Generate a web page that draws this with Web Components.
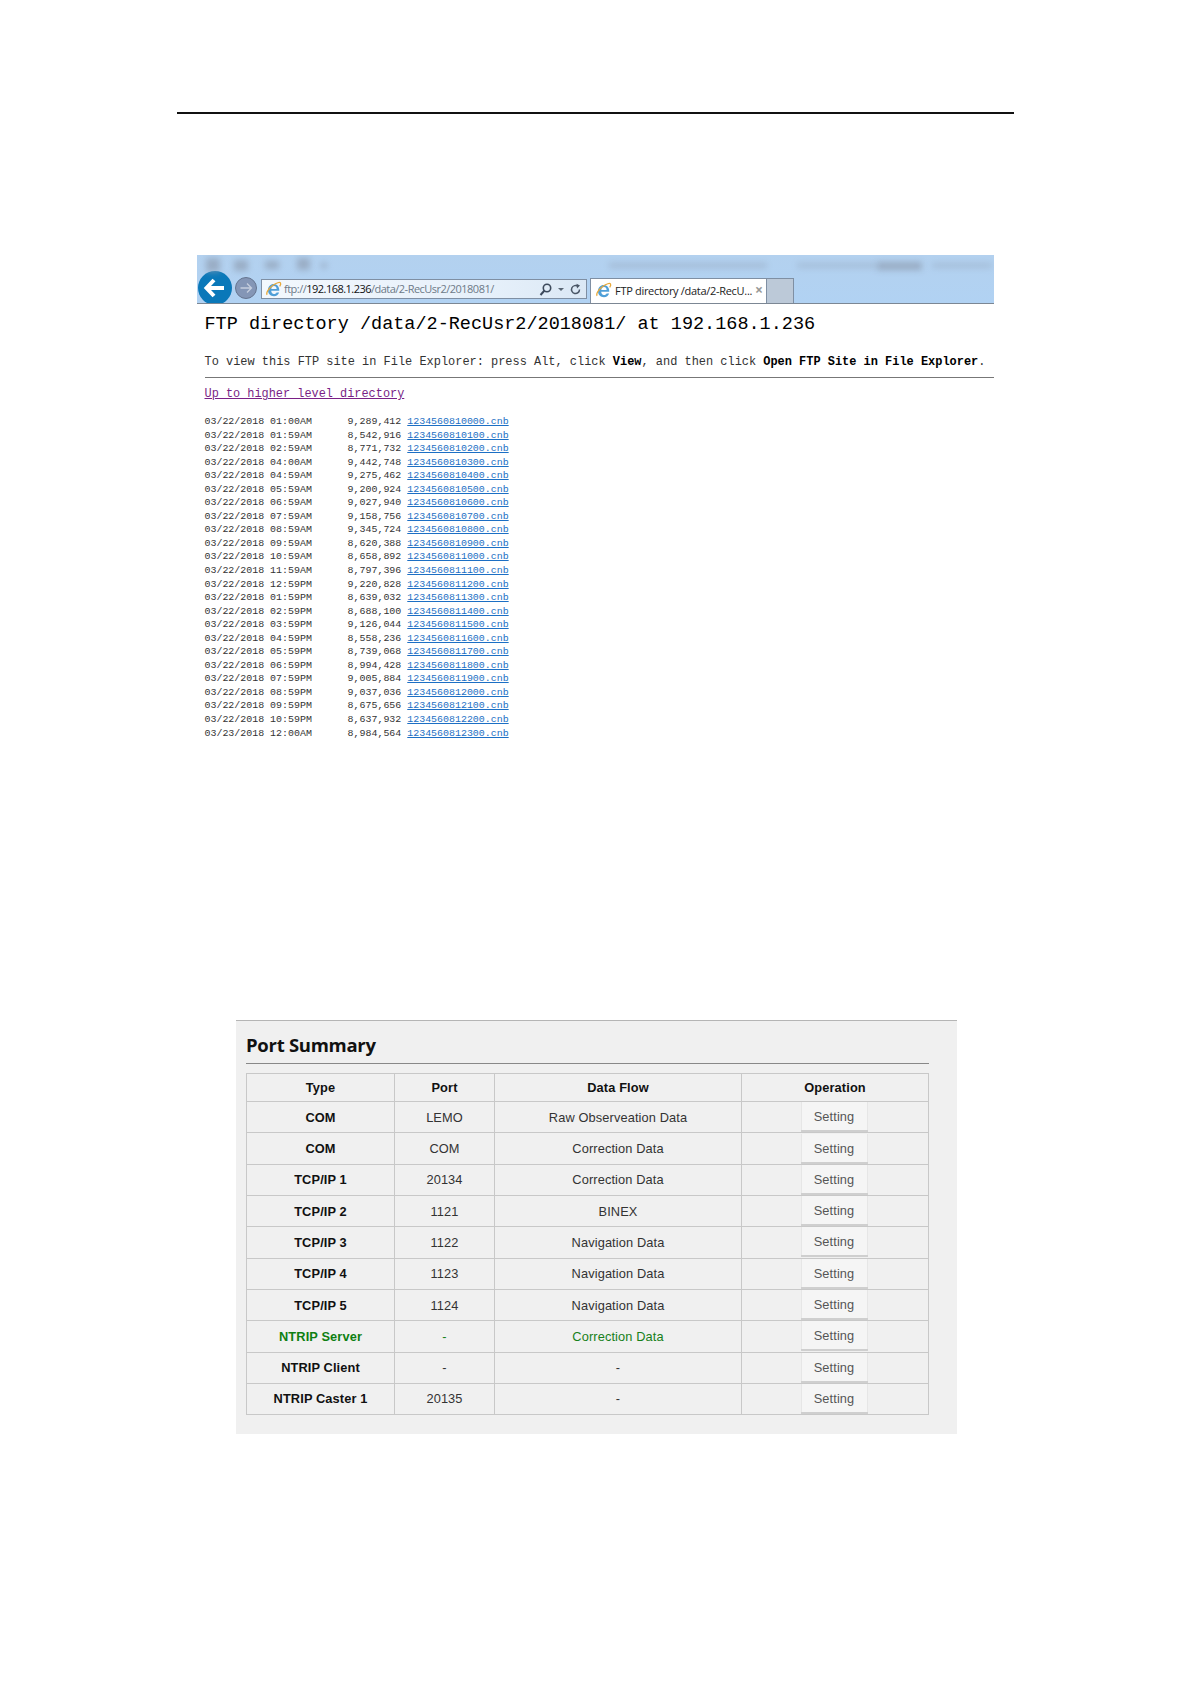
<!DOCTYPE html>
<html><head><meta charset="utf-8"><style>
html,body{margin:0;background:#fff}
</style></head><body>
<doc-page>
  <ie-window>
    <ftp-listing></ftp-listing>
  </ie-window>
  <port-summary></port-summary>
</doc-page>
<script>
const ieLogo = s => `<svg width="${s}" height="${s}" viewBox="0 0 20 20" style="flex:none"><path d="M3.6 10.2C3.7 6.3 6.5 3.4 10.2 3.4c3.900 0 6.600 3 6.600 7.400v.8H7.300c.1 2.300 1.300 3.700 3.300 3.700 1.500 0 2.500-.7 3-1.800h3c-.8 2.800-3.100 4.300-6.100 4.300-4.100 0-6.900-2.900-6.900-6.600zM7.400 9.300h6.300c-.1-2-1.200-3.300-3.100-3.300-1.800 0-3 1.300-3.200 3.300z" fill="#4f9fd8"/><path d="M2.600 16.200C.8 14.600 3.900 8.900 9 5.300c4.700-3.300 8.400-4.400 9.300-2.900.5.900 0 2.400-1 3.800" fill="none" stroke="#e8a93a" stroke-width="1.500"/></svg>`;

class DocPage extends HTMLElement{constructor(){super();this.attachShadow({mode:'open'}).innerHTML=`<style>
:host{display:block;width:1191px;height:1684px;overflow:hidden;box-sizing:border-box;padding-top:112px}
.rule{height:2px;background:#111;margin:0 177px}
.shot{margin:141px 197px 0}
</style><div class="rule"></div><div class="shot"><slot></slot></div>`}}
customElements.define('doc-page',DocPage);

class IeWindow extends HTMLElement{constructor(){super();this.attachShadow({mode:'open'}).innerHTML=`<style>
:host{display:block;margin:0}
.bar{height:48px;background:linear-gradient(#b3d1ef,#b1d2f3);border-bottom:1px solid #7c8794;position:relative;display:flex;align-items:flex-end;overflow:hidden}
.blurs{position:absolute;inset:0;pointer-events:none}
.blurs i{position:absolute;display:block;filter:blur(3px);background:#8f9eb3;opacity:.7}
.nav{display:flex;align-items:center;flex:none;height:34px;margin:0 0 -2px 1px;align-self:flex-end}
.back{width:34px;height:34px;border-radius:50%;background:#0a78b9;display:flex;align-items:center;justify-content:center;flex:none}
.fwd{width:22px;height:22px;border-radius:50%;background:#8496b6;border:1px solid #66758f;box-sizing:border-box;margin-left:3px;display:flex;align-items:center;justify-content:center;flex:none}
.addr{width:326px;height:20px;box-sizing:border-box;margin:0 0 4px 4px;background:linear-gradient(90deg,#f3f8fd,#e6f0fa 70%,#dbe8f5);border:1px solid #7f8fa3;display:flex;align-items:center;gap:2px;padding:0 4px 0 3px;font:11px/18px "Open Sans","Liberation Sans",sans-serif;color:#6d7a88;flex:none;letter-spacing:-.52px}
.addr b{font-weight:400;color:#111}
.addr .sp{flex:1}
.tab{width:177px;height:25px;box-sizing:border-box;margin-left:3px;background:#fff;border:1px solid #7f8fa3;border-bottom:0;display:flex;align-items:center;gap:3px;padding:0 4px 2px 4px;font:11px "Open Sans","Liberation Sans",sans-serif;color:#222;flex:none;letter-spacing:-.3px;white-space:nowrap}
.tab .x{margin-left:auto;color:#999;font-size:14px;font-weight:700;line-height:1}
.new{width:27px;height:25px;box-sizing:border-box;background:#bcc9d8;border:1px solid #7f8fa3;border-left:0;border-bottom:0;flex:none}
</style>
<div class="bar">
<div class="blurs">
<i style="left:9px;top:3px;width:14px;height:14px"></i>
<i style="left:37px;top:5px;width:14px;height:11px"></i>
<i style="left:68px;top:6px;width:14px;height:8px"></i>
<i style="left:100px;top:3px;width:13px;height:12px"></i>
<i style="left:124px;top:8px;width:6px;height:5px"></i>
<i style="left:412px;top:8px;width:158px;height:5px;opacity:.45"></i>
<i style="left:600px;top:8px;width:80px;height:5px;opacity:.4"></i>
<i style="left:680px;top:7px;width:45px;height:8px;opacity:.75"></i>
<i style="left:735px;top:8px;width:60px;height:5px;opacity:.4"></i>
</div>
<div class="nav">
<div class="back"><svg width="24" height="22" viewBox="0 0 24 22"><path d="M11 3L3.500 11 11 19M4 11H21" fill="none" stroke="#fff" stroke-width="4"/></svg></div>
<div class="fwd"><svg width="16" height="14" viewBox="0 0 16 14"><path d="M9 2.500L13.500 7 9 11.500M13 7H2.500" fill="none" stroke="#c5cede" stroke-width="1.300"/></svg></div>
</div>
<div class="addr">${ieLogo(17)}<span>ftp://<b>192.168.1.236</b>/data/2-RecUsr2/2018081/</span><span class="sp"></span>
<svg width="15" height="15" viewBox="0 0 15 15"><circle cx="9" cy="6" r="3.700" fill="none" stroke="#3d4a5c" stroke-width="1.600"/><path d="M6.500 8.500L2.500 13" stroke="#3d4a5c" stroke-width="2"/></svg>
<svg width="8" height="10" viewBox="0 0 8 10" style="margin:0 2px"><path d="M1 4h6L4 7z" fill="#5a6675"/></svg>
<svg width="13" height="13" viewBox="0 0 13 13"><path d="M10.500 6.500a4 4 0 1 1-1.500-3.100" fill="none" stroke="#4a5666" stroke-width="1.500"/><path d="M7.500 .8L11 2.500 8 5.500z" fill="#4a5666"/></svg></div>
<div class="tab">${ieLogo(17)}<span>FTP directory /data/2-RecU...</span><span class="x">×</span></div>
<div class="new"></div>
</div>
<slot></slot>`}}
customElements.define('ie-window',IeWindow);

const rows=`03/22/2018 01:00AM|9,289,412|1234560810000
03/22/2018 01:59AM|8,542,916|1234560810100
03/22/2018 02:59AM|8,771,732|1234560810200
03/22/2018 04:00AM|9,442,748|1234560810300
03/22/2018 04:59AM|9,275,462|1234560810400
03/22/2018 05:59AM|9,200,924|1234560810500
03/22/2018 06:59AM|9,027,940|1234560810600
03/22/2018 07:59AM|9,158,756|1234560810700
03/22/2018 08:59AM|9,345,724|1234560810800
03/22/2018 09:59AM|8,620,388|1234560810900
03/22/2018 10:59AM|8,658,892|1234560811000
03/22/2018 11:59AM|8,797,396|1234560811100
03/22/2018 12:59PM|9,220,828|1234560811200
03/22/2018 01:59PM|8,639,032|1234560811300
03/22/2018 02:59PM|8,688,100|1234560811400
03/22/2018 03:59PM|9,126,044|1234560811500
03/22/2018 04:59PM|8,558,236|1234560811600
03/22/2018 05:59PM|8,739,068|1234560811700
03/22/2018 06:59PM|8,994,428|1234560811800
03/22/2018 07:59PM|9,005,884|1234560811900
03/22/2018 08:59PM|9,037,036|1234560812000
03/22/2018 09:59PM|8,675,656|1234560812100
03/22/2018 10:59PM|8,637,932|1234560812200
03/23/2018 12:00AM|8,984,564|1234560812300`.split('\n').map(l=>l.split('|'));

class FtpListing extends HTMLElement{constructor(){super();this.attachShadow({mode:'open'}).innerHTML=`<style>
:host{display:block;font-family:"Liberation Mono",monospace;color:#222}
h1{font:400 18.5px/24px "Liberation Mono",monospace;margin:9px 0 0 7.500px;color:#000;white-space:pre}
p{font-size:11.950px;line-height:16px;margin:17px 0 0 7.500px;white-space:pre;color:#333}
p b{color:#000}
hr{border:0;height:1px;background:#777;margin:7px 0 0 7.500px}
.up{display:block;font-size:11.900px;line-height:16px;margin:8px 0 0 7.500px;color:#7a1f86;text-decoration:underline}
.files{margin:13px 0 0 7.500px;font-size:9.950px;line-height:13.550px;white-space:pre;color:#333}
.files div{height:13.550px}
a{color:#1c6fc4;text-decoration:underline}
</style>
<h1>FTP directory /data/2-RecUsr2/2018081/ at 192.168.1.236</h1>
<p>To view this FTP site in File Explorer: press Alt, click <b>View</b>, and then click <b>Open FTP Site in File Explorer</b>.</p>
<hr>
<a class="up">Up to higher level directory</a>
<div class="files">${rows.map(r=>`<div>${r[0]}      ${r[1]} <a>${r[2]}.cnb</a></div>`).join('')}</div>`}}
customElements.define('ftp-listing',FtpListing);

const ports=[['COM','LEMO','Raw Observeation Data'],['COM','COM','Correction Data'],['TCP/IP 1','20134','Correction Data'],['TCP/IP 2','1121','BINEX'],['TCP/IP 3','1122','Navigation Data'],['TCP/IP 4','1123','Navigation Data'],['TCP/IP 5','1124','Navigation Data'],['NTRIP Server','-','Correction Data',1],['NTRIP Client','-','-'],['NTRIP Caster 1','20135','-']];

class PortSummary extends HTMLElement{constructor(){super();this.attachShadow({mode:'open'}).innerHTML=`<style>
:host{display:block;position:relative;box-sizing:border-box;width:721px;height:414px;margin:280px 0 0 39px;background:#f0f0f0;border-top:1px solid #b5b5b5;padding:0 28px 0 10px;font-family:"Liberation Sans",Arial,sans-serif}
h2{font:700 18.500px/26px "Open Sans","Liberation Sans",sans-serif;color:#111;margin:11px 0 0 0;padding-bottom:5px;border-bottom:1px solid #888;letter-spacing:-.28px}
table{border-collapse:collapse;table-layout:fixed;width:682px;margin-top:9px;font-size:12.800px;color:#333}
th,td{border:1px solid #c8c8c8;text-align:center;padding:0;height:30.300px;letter-spacing:.12px}
th{height:27px;color:#111;font-weight:700}
td.t{font-weight:700;color:#111}
tr.on td{color:#17801a}
tr.on td.t{color:#0e7f12}
.b{display:block;box-sizing:border-box;width:67px;height:30px;margin:0 auto;background:#f5f5f5;border-bottom:2px solid #cfcfcf;box-shadow:inset 1px 0 #e6e6e6,inset -1px 0 #e6e6e6;line-height:30px;color:#555;position:relative;left:-1px}
</style>
<h2>Port Summary</h2>
<table><colgroup><col style="width:148px"><col style="width:100px"><col style="width:247px"><col style="width:187px"></colgroup>
<tr><th>Type</th><th>Port</th><th>Data Flow</th><th>Operation</th></tr>
${ports.map(p=>`<tr class="${p[3]?'on':''}"><td class="t">${p[0]}</td><td>${p[1]}</td><td>${p[2]}</td><td><span class="b">Setting</span></td></tr>`).join('')}
</table>`}}
customElements.define('port-summary',PortSummary);
</script>
</body></html>
